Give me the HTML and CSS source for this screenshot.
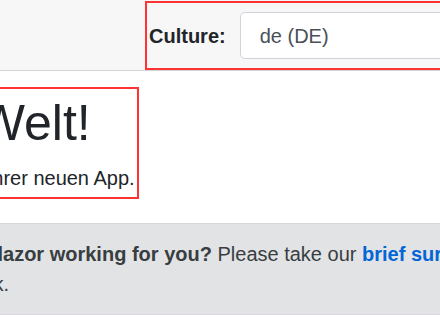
FILE: index.html
```html
<!DOCTYPE html>
<html lang="de">
<head>
    <meta charset="UTF-8">
    <meta name="viewport" content="width=device-width, initial-scale=1.0">
    <title>Hallo, Welt!</title>
    <link rel="stylesheet" href="styles.css">
</head>
<body>
    <div class="main">
        <div class="top-row">
            <form class="culture-picker">
                <label class="culture-label" for="culture">Culture:</label>
                <select class="culture-select" id="culture">
                    <option>de (DE)</option>
                    <option>en (US)</option>
                    <option>fr (FR)</option>
                </select>
            </form>
        </div>

        <div class="content">
            <div class="greeting">
                <h1>Hallo, Welt!</h1>
                <div class="lead">Willkommen bei Ihrer neuen App.</div>
            </div>

            <div class="survey" role="alert">
                <span class="survey-icon" aria-hidden="true">
                    <svg width="16" height="16" viewBox="0 0 8 8"><path d="M6 0L5 1l2 2 1-1-2-2zM4 2L0 6v2h2l4-4-2-2z" fill="currentColor"/></svg>
                </span><strong>How is Blazor working for you?</strong>
                <span class="nowrap">Please take our <a class="survey-link" href="#">brief survey</a></span>
                and tell us what you think.
            </div>
        </div>
    </div>
</body>
</html>
```

FILE: styles.css
```css
html, body {
    margin: 0;
    overflow: hidden;
}
body {
    font-family: "Liberation Sans", Arial, sans-serif;
    font-size: 20px;
    line-height: 1.5;
    color: #212529;
    background-color: white;
}
.top-row {
    display: flex;
    height: 71px;
    box-sizing: border-box;
    padding: 1px 0 0 145px;
    background-color: #f7f7f7;
    border-bottom: 1px solid #d6d5d5;
}
.culture-picker {
    display: flex;
    align-items: center;
    gap: 14px;
    flex: none;
    width: 420px;
    margin: 0;
    padding-left: 2px;
    border: 2px solid #f33;
}
.culture-label {
    font-weight: bold;
}
.culture-select {
    appearance: none;
    width: 280px;
    height: 47px;
    padding: 0 19px;
    font-family: inherit;
    font-size: 20px;
    color: #495057;
    background-color: white;
    border: 1px solid #ced4da;
    border-radius: 5px;
}
.content {
    width: 684px;
    margin-left: -166px;
    padding-top: 16px;
}
.greeting {
    display: inline-block;
    padding: 4px 2px 4px 4px;
    border: 2px solid #f33;
}
.greeting h1 {
    margin: 0 0 10px -4px;
    font-size: 50px;
    font-weight: normal;
    line-height: 1.2;
}
.survey {
    margin: 24px 0 0 -81px;
    padding: 15px 25px;
    color: #383d41;
    background-color: #e2e3e5;
    border: 1px solid #d6d8db;
    text-indent: 108px;
}
.survey-icon {
    display: inline-block;
    margin-right: 10px;
    text-indent: 0;
}
.nowrap {
    white-space: nowrap;
}
.survey-link {
    color: #0366d6;
    font-weight: bold;
    text-decoration: none;
}
```
